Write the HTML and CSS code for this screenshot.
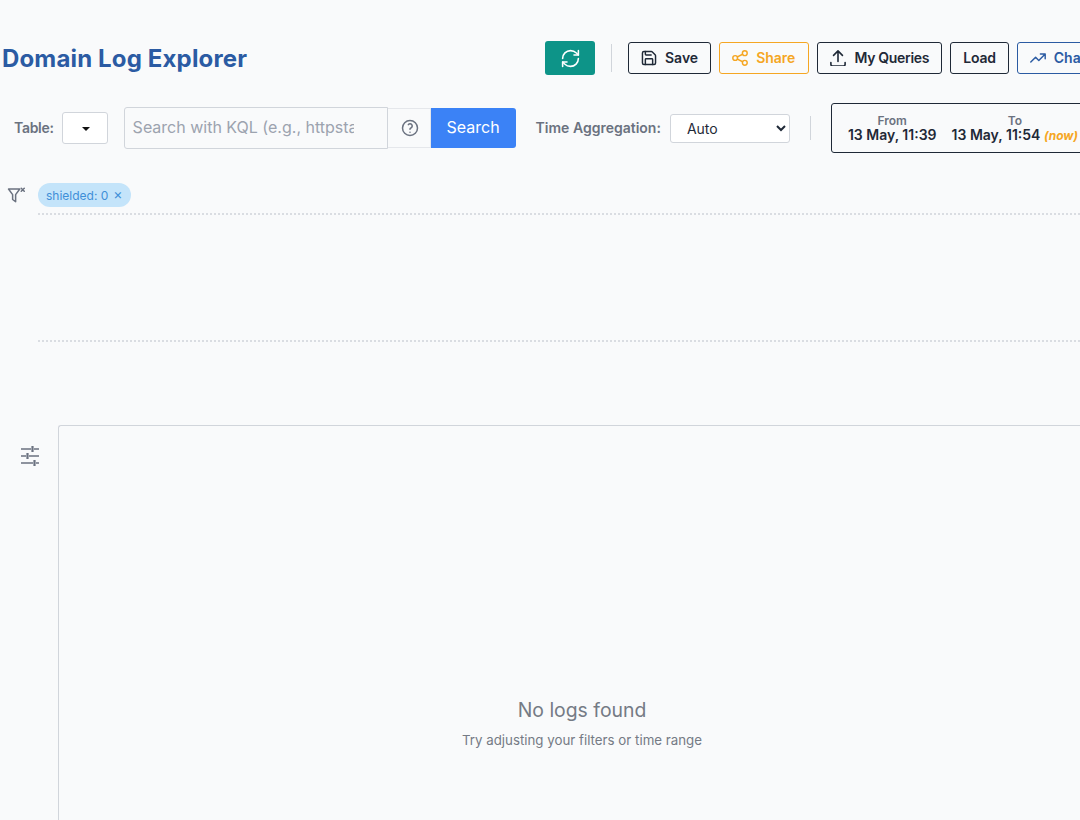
FILE: index.html
```html
<!DOCTYPE html>
<html lang="en">
<head>
  <meta charset="UTF-8">
  <title>Domain Log Explorer</title>
  <link rel="stylesheet" href="styles.css">
</head>
<body>
  <div class="page">
    <header class="top-row">
      <h1 class="title">Domain Log Explorer</h1>
      <button class="btn-refresh" aria-label="Refresh">
        <svg width="21" height="21" viewBox="0 0 24 24" fill="none" stroke="#fff" stroke-width="1.8" stroke-linecap="round" stroke-linejoin="round"><path d="M3 12a9 9 0 0 1 9-9 9.75 9.75 0 0 1 6.74 2.74L21 8"/><path d="M21 3v5h-5"/><path d="M21 12a9 9 0 0 1-9 9 9.75 9.75 0 0 1-6.74-2.74L3 16"/><path d="M8 16H3v5"/></svg>
      </button>
      <span class="divider divider-top"></span>
      <button class="btn">
        <svg width="16" height="16" viewBox="1 1 22 22" fill="none" stroke="currentColor" stroke-width="2" stroke-linecap="round" stroke-linejoin="round"><path d="M15.2 3a2 2 0 0 1 1.4.6l3.8 3.8a2 2 0 0 1 .6 1.4V19a2 2 0 0 1-2 2H5a2 2 0 0 1-2-2V5a2 2 0 0 1 2-2z"/><path d="M17 21v-7a1 1 0 0 0-1-1H8a1 1 0 0 0-1 1v7"/><path d="M7 3v4a1 1 0 0 0 1 1h7"/></svg>
        Save
      </button>
      <button class="btn btn-share">
        <svg width="16" height="16" viewBox="2 2 20 20" fill="none" stroke="currentColor" stroke-width="1.8" stroke-linecap="round" stroke-linejoin="round"><circle cx="6" cy="12" r="3"/><circle cx="18" cy="6" r="3"/><circle cx="18" cy="18" r="3"/><path d="M8.7 10.7l6.6-3.4M8.7 13.3l6.6 3.4"/></svg>
        Share
      </button>
      <button class="btn btn-queries">
        <svg width="16" height="16" viewBox="3 3 18 18" fill="none" stroke="currentColor" stroke-width="1.8" stroke-linecap="round" stroke-linejoin="round"><path d="M4 17v2a2 2 0 0 0 2 2h12a2 2 0 0 0 2-2v-2"/><path d="M7 9l5-5 5 5M12 4v12"/></svg>
        My Queries
      </button>
      <button class="btn btn-load">Load</button>
      <button class="btn btn-chart">
        <svg width="16" height="16" viewBox="2 2 20 20" fill="none" stroke="currentColor" stroke-width="1.8" stroke-linecap="round" stroke-linejoin="round"><path d="M3 17l6-6 4 4 8-8M15 7h6v6"/></svg>
        Charts
      </button>
    </header>

    <div class="toolbar">
      <label class="label label-table">Table:</label>
      <div class="table-select"><span class="caret"></span></div>
      <div class="search-group">
        <input class="search-input" type="text" placeholder="Search with KQL (e.g., httpstatus:200)">
        <span class="help">
          <svg width="20" height="20" viewBox="0 0 24 24" fill="none" stroke="#6b7280" stroke-width="1.8" stroke-linecap="round" stroke-linejoin="round"><circle cx="12" cy="12" r="9"/><path d="M12 17v.01M12 13.5a1.5 1.5 0 0 1 1-1.5 2.6 2.6 0 1 0-3-4"/></svg>
        </span>
        <button class="btn-search">Search</button>
      </div>
      <label class="label label-agg">Time Aggregation:</label>
      <select class="agg-select">
        <option>Auto</option>
      </select>
      <span class="divider divider-bar"></span>
      <div class="range">
        <div class="range-col">
          <span class="range-head">From</span>
          <span class="range-value">13 May, 11:39</span>
        </div>
        <div class="range-col">
          <span class="range-head">To</span>
          <span class="range-value">13 May, 11:54 <em class="now">(now)</em></span>
        </div>
      </div>
    </div>

    <div class="filters">
      <svg class="filter-icon" width="18" height="18" viewBox="0 0 24 24" fill="none" stroke="#6b7280" stroke-width="2" stroke-linecap="round" stroke-linejoin="round"><path d="M2 4h15l-5.5 7.5V21l-4-3v-6.5L2 4z"/><path d="M19 3l4 4M23 3l-4 4"/></svg>
      <div class="filter-bar">
        <span class="chip">shielded: 0 <span class="chip-x">×</span></span>
      </div>
    </div>

    <div class="chart-area"></div>

    <div class="results">
      <div class="side">
        <svg width="20" height="22" viewBox="0 0 20 22" fill="none" stroke="#6b7280" stroke-width="1.6"><path d="M1 4h10M14 4h5M1 11h5M9 11h10M1 18h12M16 18h3"/><path stroke-width="2.2" d="M12.5 1v6M7.5 8v6M14.5 15v6"/></svg>
      </div>
      <div class="logs">
        <div class="empty">
          <p class="empty-title">No logs found</p>
          <p class="empty-sub">Try adjusting your filters or time range</p>
        </div>
      </div>
    </div>
  </div>
</body>
</html>
```

FILE: styles.css
```css
* {
  box-sizing: border-box;
}

html, body {
  margin: 0;
  height: 820px;
  overflow: hidden;
  background-color: #f9fafb;
}

body {
  font-family: Inter, "Noto Sans", sans-serif;
  color: #1f2937;
}

.page {
  width: 1300px;
}

button {
  font-family: inherit;
  cursor: pointer;
}

/* top row */
.top-row {
  display: flex;
  align-items: center;
  height: 34px;
  margin-top: 41px;
  padding-left: 2px;
}

.title {
  width: 543px;
  margin: 0;
  font-size: 24px;
  font-weight: 700;
  letter-spacing: 0.15px;
  color: #2b5ba3;
  white-space: nowrap;
}

.btn-refresh {
  display: flex;
  align-items: center;
  justify-content: center;
  width: 50px;
  height: 34px;
  background-color: #0d9488;
  border: none;
  border-radius: 3px;
}

.divider {
  display: block;
  width: 1px;
  background-color: #d1d5db;
}

.divider-top {
  height: 28px;
  margin: 0 16px;
}

.btn {
  display: flex;
  align-items: center;
  gap: 8px;
  height: 32px;
  margin-right: 8px;
  padding: 0 12px 2px;
  background-color: transparent;
  border: 1px solid #1f2937;
  border-radius: 3px;
  color: #1f2937;
  font-size: 14px;
  font-weight: 600;
  white-space: nowrap;
}

.btn svg {
  margin-top: 2px;
}

.btn-share {
  padding-right: 13px;
  border-color: #f5a623;
  color: #f5a623;
}

.btn-queries {
  letter-spacing: -0.3px;
}

.btn-load {
  letter-spacing: -0.2px;
}

.btn-chart {
  border-color: #2b5ba3;
  color: #2b5ba3;
}

/* toolbar */
.toolbar {
  display: flex;
  align-items: center;
  height: 50px;
  margin-top: 28px;
  padding-left: 14px;
}

.label {
  margin-bottom: 2px;
  font-size: 14px;
  font-weight: 600;
  color: #6b7280;
  white-space: nowrap;
}

.label-table {
  letter-spacing: -0.3px;
}

.table-select {
  display: flex;
  align-items: center;
  justify-content: center;
  width: 46px;
  height: 32px;
  margin-left: 8px;
  padding-left: 2px;
  background-color: #fff;
  border: 1px solid #d1d5db;
  border-radius: 3px;
}

.caret {
  margin-top: 2px;
  border-top: 4px solid #111;
  border-left: 4px solid transparent;
  border-right: 4px solid transparent;
}

.search-group {
  display: flex;
  align-items: center;
  margin-left: 16px;
}

.search-input {
  width: 264px;
  height: 42px;
  padding: 0 33px 2px 8px;
  background-color: transparent;
  border: 1px solid #d1d5db;
  border-radius: 3px 0 0 3px;
  font-family: inherit;
  font-size: 16px;
  outline: none;
}

.search-input::placeholder {
  color: #9ca3af;
}

.help {
  display: flex;
  align-items: center;
  justify-content: center;
  width: 43px;
  height: 40px;
  padding-left: 3px;
  border: 1px solid #e5e7eb;
  border-left: none;
}

.btn-search {
  width: 85px;
  height: 40px;
  padding: 0 0 2px;
  background-color: #3b82f6;
  border: none;
  border-radius: 0 3px 3px 0;
  color: #fff;
  font-size: 16px;
}

.label-agg {
  margin-left: 20px;
}

.agg-select {
  width: 120px;
  height: 29px;
  margin-left: 9px;
  padding-left: 12px;
  background-color: #fff;
  border: 1px solid #d1d5db;
  border-radius: 3px;
  font-family: inherit;
  font-size: 14px;
  color: #1f2937;
}

.divider-bar {
  height: 24px;
  margin: 0 20px;
}

.range {
  display: flex;
  gap: 15px;
  flex-shrink: 0;
  width: 300px;
  height: 50px;
  padding: 10px 16px 0;
  border: 1px solid #1f2937;
  border-radius: 3px;
}

.range-col {
  display: flex;
  flex-direction: column;
  align-items: center;
}

.range-head {
  font-size: 12px;
  font-weight: 600;
  line-height: 13px;
  color: #6b7280;
}

.range-value {
  font-size: 14px;
  font-weight: 600;
  line-height: 16px;
  white-space: nowrap;
}

.now {
  font-size: 12px;
  font-weight: 700;
  color: #f5a623;
}

/* filters */
.filters {
  display: flex;
  align-items: flex-start;
  margin-top: 29px;
  padding-left: 7px;
}

.filter-icon {
  margin-top: 4px;
}

.filter-bar {
  flex: 1;
  height: 33px;
  margin-left: 13px;
  padding-top: 1px;
  border-bottom: 2px dotted #dadde2;
}

.chip {
  display: inline-flex;
  align-items: center;
  gap: 5px;
  height: 24px;
  padding: 0 8px;
  background-color: #c4e4fa;
  border-radius: 12px;
  color: #3f8fd8;
  font-size: 12px;
}

.chip-x {
  margin-bottom: 3px;
  font-size: 14px;
}

.chart-area {
  height: 127px;
  margin-left: 38px;
  border-bottom: 2px dotted #dadde2;
}

/* results */
.results {
  display: flex;
  margin-top: 83px;
}

.side {
  width: 58px;
  padding: 20px 0 0 20px;
}

.logs {
  width: 1047px;
  height: 420px;
  background-color: transparent;
  border-top: 1px solid #d1d5db;
  border-left: 1px solid #d1d5db;
  border-radius: 3px 0 0 0;
}

.empty {
  padding-top: 272px;
  text-align: center;
}

.empty-title {
  margin: 0;
  font-size: 19.4px;
  line-height: 24px;
  color: #757b85;
}

.empty-sub {
  margin: 6px 0 0;
  font-size: 13.3px;
  line-height: 24px;
  color: #757b85;
}
```
